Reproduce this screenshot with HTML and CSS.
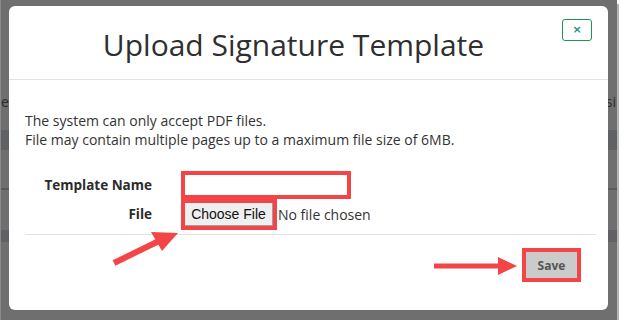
FILE: index.html
```html
<!DOCTYPE html>
<html lang="en">
<head>
    <meta charset="UTF-8">
    <title>Upload Signature Template</title>
    <link rel="stylesheet" href="styles.css">
</head>
<body>
    <div class="screen">
        <div class="page">
            <div class="page-row">
                <span>ea</span>
                <span>si</span>
            </div>
            <div class="page-band"></div>
            <div class="page-rule"></div>
            <div class="page-band page-band-low"></div>
        </div>

        <div class="modal">
            <div class="modal-header">
                <h1>Upload Signature Template</h1>
                <button class="btn-close">&times;</button>
            </div>
            <div class="modal-body">
                <p>The system can only accept PDF files.</p>
                <p>File may contain multiple pages up to a maximum file size of 6MB.</p>

                <div class="form">
                    <div class="form-row">
                        <label class="form-label">Template Name</label>
                        <input class="text-input mark" type="text">
                    </div>
                    <div class="form-row">
                        <label class="form-label">File</label>
                        <span class="file-btn mark">Choose File</span>
                        <span class="file-name">No file chosen</span>
                    </div>
                </div>

                <div class="modal-footer">
                    <button class="btn-save mark">Save</button>
                </div>
            </div>

            <!-- annotation arrows -->
            <svg class="arrows" width="599" height="304" viewBox="0 0 599 304">
                <line x1="105" y1="257" x2="152" y2="234" stroke="#f34547" stroke-width="6"/>
                <polygon points="169,227 142,226 153,245" fill="#f34547"/>
                <line x1="425" y1="260" x2="492" y2="260" stroke="#f34547" stroke-width="5"/>
                <polygon points="508,260 489,251 489,269" fill="#f34547"/>
            </svg>
        </div>
    </div>
</body>
</html>
```

FILE: styles.css
```css
* {
    margin: 0;
    padding: 0;
    box-sizing: border-box;
}

body {
    background: #fff;
    font-family: 'Open Sans', sans-serif;
    color: #333;
}

.screen {
    position: relative;
    width: 617px;
    height: 320px;
    background: #6f6f70;
    box-shadow: 2px 4px 0 #b4b4b4;
    border-left: 1px solid #8a8a8a;
}

.page {
    padding-top: 92px;
}

.page-row {
    display: flex;
    justify-content: space-between;
    padding: 0 1px 0 0;
    font-size: 14px;
    color: #2a2a2a;
    height: 38px;
}

.page-band {
    height: 20px;
    background: #5f6165;
}

.page-rule {
    margin-top: 38px;
    height: 2px;
    background: #5a5a5c;
}

.page-band-low {
    margin-top: 40px;
    height: 12px;
}

.modal {
    position: absolute;
    left: 8px;
    top: 6px;
    width: 599px;
    height: 304px;
    background: #fff;
    border-radius: 6px;
}

.modal-header {
    position: relative;
    height: 74px;
    border-bottom: 1px solid #e3e3e3;
    padding: 21px 30px 0 0;
    text-align: center;
}

.modal-header h1 {
    font-size: 30px;
    font-weight: 400;
    line-height: 36px;
    color: #2f2f2f;
}

.btn-close {
    position: absolute;
    left: 553px;
    top: 13px;
    width: 30px;
    height: 22px;
    border: 1px solid #1d9650;
    border-radius: 3px;
    background: #fff;
    color: #2a8a8a;
    font-size: 11px;
    font-weight: 700;
    line-height: 18px;
    font-family: 'DejaVu Sans', sans-serif;
}

.modal-body {
    padding: 31px 12px 0 16px;
    font-size: 14px;
    line-height: 19px;
}

.form {
    margin-top: 26px;
    display: flex;
    flex-direction: column;
    gap: 8px;
    padding-bottom: 8px;
    border-bottom: 1px solid #e2e2e2;
}

.form-row {
    display: flex;
    align-items: center;
}

.form-label {
    width: 127px;
    text-align: right;
    font-weight: 700;
    font-size: 13.5px;
    color: #2b2b2b;
    margin-right: 33px;
}

.mark {
    outline: 4px solid #f34547;
}

.text-input {
    width: 162px;
    height: 20px;
    border: none;
    background: #fff;
}

.file-btn {
    display: inline-block;
    width: 88px;
    height: 23px;
    background: #efefef;
    border-right: 1px solid #a0a0a0;
    border-bottom: 1px solid #a0a0a0;
    font-family: 'Liberation Sans', Arial, sans-serif;
    font-size: 14px;
    line-height: 22px;
    text-align: center;
    color: #111;
}

.file-name {
    margin-left: 5px;
    font-size: 14px;
    color: #333;
}

.modal-footer {
    display: flex;
    justify-content: flex-end;
    padding: 17px 19px 0 0;
}

.btn-save {
    width: 51px;
    height: 26px;
    border: none;
    background: #cbcbcb;
    color: #555;
    font-family: 'Open Sans', sans-serif;
    font-weight: 700;
    font-size: 12px;
}

.arrows {
    position: absolute;
    left: 0;
    top: 0;
    pointer-events: none;
}
```
